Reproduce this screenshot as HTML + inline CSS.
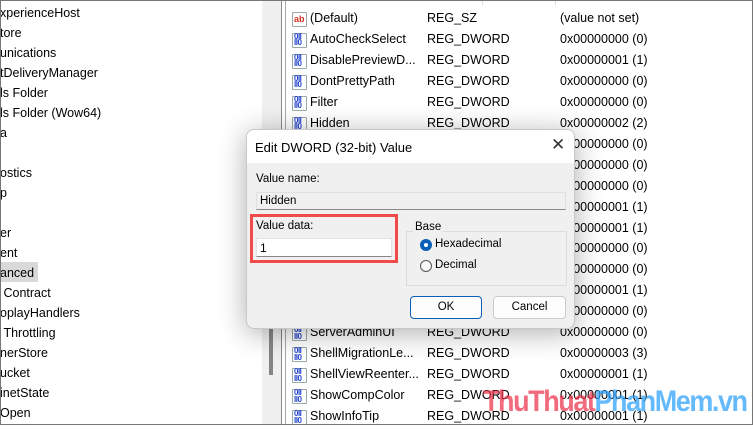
<!DOCTYPE html>
<html><head><style>
*{margin:0;padding:0;box-sizing:border-box}
body{width:753px;height:425px;overflow:hidden;background:#fff;font-family:"Liberation Sans",sans-serif;font-size:12.5px;color:#000;position:relative}
.frame{position:absolute;inset:0;border:1px solid #777;z-index:50;pointer-events:none}
.t{position:absolute;left:0;white-space:nowrap}
.sb{position:absolute;left:262px;top:0;width:19px;height:425px;background:#f0f0f0}
.thumb{position:absolute;left:269px;top:250px;width:4px;height:125px;background:#858585}
.l1{position:absolute;left:281px;top:0;width:1px;height:425px;background:#8a8a8a}
.l2{position:absolute;left:285px;top:0;width:1px;height:425px;background:#a8a8a8}
.row{position:absolute;left:292px;height:20px;white-space:nowrap}
.row span{position:absolute;top:0}
.ic{position:absolute;left:0;top:-7px;width:15px;height:15px;border:1px solid #9aa;background:#fff;border-radius:1px}
.ic i{position:absolute;left:1px;top:0;font-style:normal;font-weight:bold;font-size:8px;line-height:6.5px;color:#2244cc;letter-spacing:-.5px}
.ic b{position:absolute;left:1px;top:1px;font-size:9px;color:#d03020}
.dlg{position:absolute;left:246px;top:129px;width:329px;height:200px;background:#f0f0f0;border:1px solid #c8c8c8;border-radius:8px;box-shadow:0 4px 28px rgba(0,0,0,.32);overflow:hidden;z-index:10}
.dt{height:33px;background:#fff;position:relative}
.abs{position:absolute;white-space:nowrap}
.wm{position:absolute;left:483px;top:385px;font-weight:bold;font-size:30px;letter-spacing:-1.6px;z-index:20;white-space:nowrap;transform-origin:left top;transform:scaleX(.9)}
</style></head><body>
<div class="frame"></div>
<div class="t" style="top:6px">xperienceHost</div>
<div class="t" style="top:26px">tore</div>
<div class="t" style="top:46px">unications</div>
<div class="t" style="top:66px">tDeliveryManager</div>
<div class="t" style="top:86px">ls Folder</div>
<div class="t" style="top:106px">ls Folder (Wow64)</div>
<div class="t" style="top:126px">a</div>
<div class="t" style="top:166px">ostics</div>
<div class="t" style="top:186px">p</div>
<div class="t" style="top:226px">er</div>
<div class="t" style="top:246px">ent</div>
<div class="t" style="top:262px;height:20px;width:38px;background:#d9d9d9;padding-top:4px">anced</div>
<div class="t" style="top:286px">&nbsp;Contract</div>
<div class="t" style="top:306px">oplayHandlers</div>
<div class="t" style="top:326px">&nbsp;Throttling</div>
<div class="t" style="top:346px">nerStore</div>
<div class="t" style="top:366px">ucket</div>
<div class="t" style="top:386px">inetState</div>
<div class="t" style="top:406px">Open</div>
<div class="sb"></div><div class="thumb"></div><div class="l1"></div><div class="l2"></div>
<div class="abs" style="left:482px;top:0;width:1px;height:5px;background:#ddd"></div>
<div class="abs" style="left:555px;top:0;width:1px;height:5px;background:#ddd"></div>
<div id="rows"></div>
<script>
var r=[["(Default)","REG_SZ","(value not set)",1],["AutoCheckSelect","REG_DWORD","0x00000000 (0)"],["DisablePreviewD...","REG_DWORD","0x00000001 (1)"],["DontPrettyPath","REG_DWORD","0x00000000 (0)"],["Filter","REG_DWORD","0x00000000 (0)"],["Hidden","REG_DWORD","0x00000002 (2)"],["x","REG_DWORD","0x00000000 (0)"],["x","REG_DWORD","0x00000000 (0)"],["x","REG_DWORD","0x00000000 (0)"],["x","REG_DWORD","0x00000001 (1)"],["x","REG_DWORD","0x00000001 (1)"],["x","REG_DWORD","0x00000000 (0)"],["x","REG_DWORD","0x00000000 (0)"],["x","REG_DWORD","0x00000001 (1)"],["x","REG_DWORD","0x00000000 (0)"],["ServerAdminUI","REG_DWORD","0x00000000 (0)"],["ShellMigrationLe...","REG_DWORD","0x00000003 (3)"],["ShellViewReenter...","REG_DWORD","0x00000001 (1)"],["ShowCompColor","REG_DWORD","0x00000001 (1)"],["ShowInfoTip","REG_DWORD","0x00000001 (1)"]];
var h="";r.forEach(function(e,i){var y=19+i*20.95;h+='<div class="row" style="top:'+(y-8)+'px"><div class="ic" style="top:1px">'+(e[3]?'<b>ab</b>':'<i>0ll<br>ll0</i>')+'</div><span style="left:18px">'+e[0]+'</span><span style="left:135px">'+e[1]+'</span><span style="left:268px">'+e[2]+'</span></div>';});
document.getElementById("rows").innerHTML=h;
</script>
<div class="dlg">
 <div class="dt"><div class="abs" style="left:8px;top:10px;font-size:13px">Edit DWORD (32-bit) Value</div>
 <div class="abs" style="left:304px;top:5px;font-size:17px;color:#333">✕</div></div>
 <div class="abs" style="left:9px;top:43px;font-size:11.5px">Value name:</div>
 <div class="abs" style="left:9px;top:62px;width:310px;height:18px;background:#f0f0f0;border:1px solid #e0e0e0;border-bottom-color:#888;font-size:11.5px;padding:2px 0 0 3px">Hidden</div>
 <div class="abs" style="left:3px;top:84px;width:148px;height:49px;border:3px solid #f04a4a"></div>
 <div class="abs" style="left:9px;top:90px;font-size:11.5px">Value data:</div>
 <div class="abs" style="left:9px;top:108px;width:136px;height:19px;background:#fff;border:1px solid #e4e4e4;border-bottom-color:#888;font-size:12px;padding:2px 0 0 3px">1</div>
 <div class="abs" style="left:159px;top:101px;width:161px;height:55px;border:1px solid #dcdcdc"></div>
 <div class="abs" style="left:166px;top:91px;font-size:11.5px;background:#f0f0f0;padding:0 2px">Base</div>
 <div class="abs" style="left:173px;top:109px;width:12px;height:12px;border-radius:50%;background:#0a5fb8"><div style="position:absolute;left:4px;top:4px;width:4px;height:4px;border-radius:50%;background:#fff"></div></div>
 <div class="abs" style="left:188px;top:108px;font-size:11.5px">Hexadecimal</div>
 <div class="abs" style="left:173px;top:130px;width:12px;height:12px;border-radius:50%;border:1px solid #555;background:#f8f8f8"></div>
 <div class="abs" style="left:188px;top:129px;font-size:11.5px">Decimal</div>
 <div class="abs" style="left:163px;top:166px;width:72px;height:23px;border:1px solid #0a5fb8;border-radius:4px;background:#fdfdfd;text-align:center;padding-top:4px;font-size:11.5px">OK</div>
 <div class="abs" style="left:246px;top:166px;width:73px;height:23px;border:1px solid #ccc;border-radius:4px;background:#fdfdfd;text-align:center;padding-top:4px;font-size:11.5px">Cancel</div>
</div>
<div class="wm"><span style="color:rgba(236,50,75,.72)">ThuThuat</span><span style="color:rgba(40,160,250,.72)">PhanMem.vn</span></div>
</body></html>
